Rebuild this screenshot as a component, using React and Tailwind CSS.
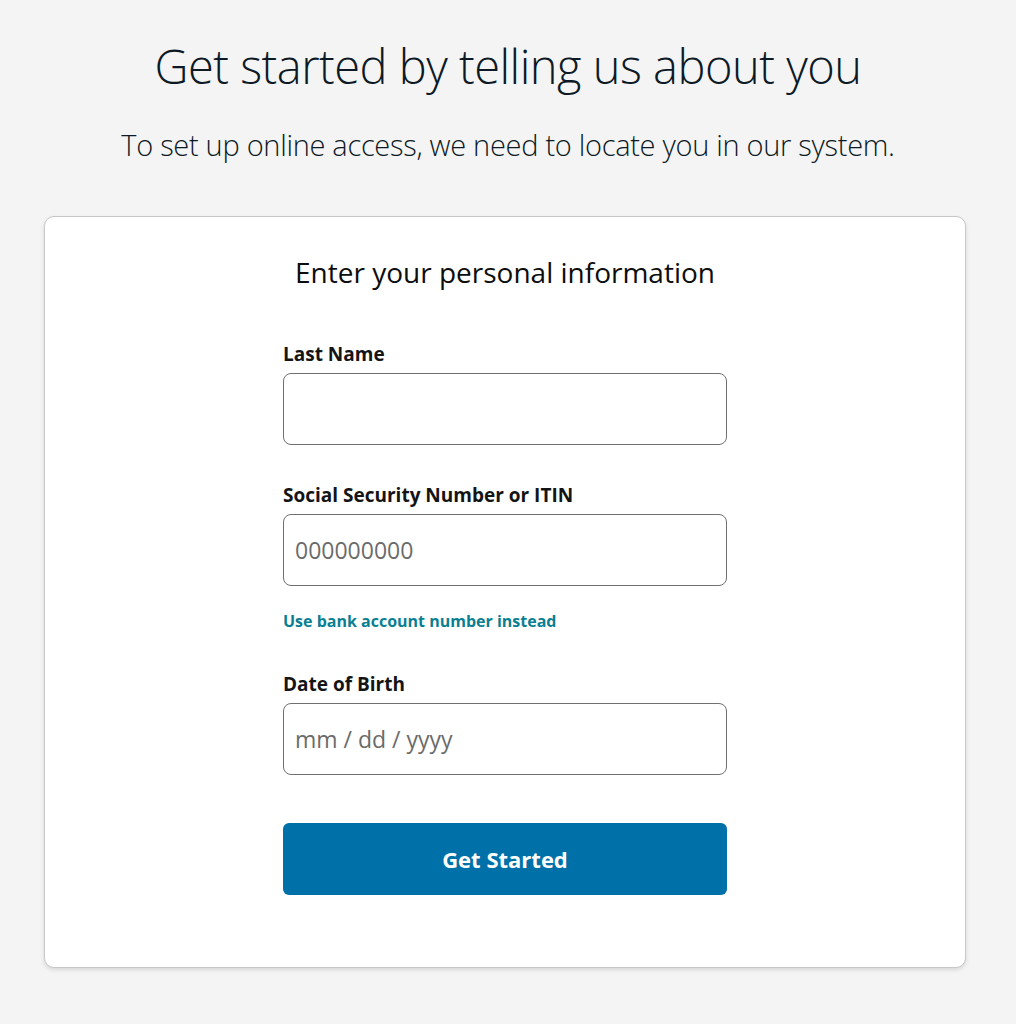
import React from 'react'

const Field = ({ id, label, placeholder, children }) => (
  <div className="flex flex-col">
    <label htmlFor={id} className="text-[19px] leading-[24px] font-bold text-[#141414] mb-[7px]">
      {label}
    </label>
    <input
      id={id}
      type="text"
      placeholder={placeholder}
      className="h-[72px] w-full rounded-[8px] border border-[#707070] bg-white px-[11px] text-[23px] text-[#141414] placeholder-[#6b6b6b] outline-none"
    />
    {children}
  </div>
)

const App = () => {
  return (
    <div className="min-h-screen w-full bg-[#f4f4f4] font-['Open_Sans',sans-serif] pt-[36px] pb-[56px]">
      <h1 className="text-center text-[47px] leading-[60px] font-light text-[#0d1a26] tracking-[-0.5px]">
        Get started by telling us about you
      </h1>
      <p className="mt-[31px] text-center text-[29px] leading-[36px] font-light text-[#0d1a26] tracking-[-0.3px]">
        To set up online access, we need to locate you in our system.
      </p>

      <div className="ml-[44px] mr-[50px] mt-[53px] rounded-[10px] border border-[#c8c8c8] bg-white shadow-[0_2px_4px_rgba(0,0,0,0.12)] pt-[35px] pb-[72px]">
        <h2 className="text-center text-[28px] leading-[40px] text-[#0d0d0d]">
          Enter your personal information
        </h2>

        <form className="mx-auto mt-[50px] flex w-[444px] flex-col" onSubmit={(e) => e.preventDefault()}>
          <Field id="lastName" label="Last Name" />
          <div className="mt-[38px]">
            <Field id="ssn" label="Social Security Number or ITIN" placeholder="000000000">
              <a href="#" className="mt-[24px] text-[16px] leading-[22px] font-bold text-[#0b7f92]">
                Use bank account number instead
              </a>
            </Field>
          </div>
          <div className="mt-[40px]">
            <Field id="dob" label="Date of Birth" placeholder="mm / dd / yyyy" />
          </div>
          <button
            type="submit"
            className="mt-[48px] h-[72px] w-full rounded-[6px] bg-[#0070a8] text-[22px] font-bold text-white"
          >
            Get Started
          </button>
        </form>
      </div>
    </div>
  )
}

export default App
